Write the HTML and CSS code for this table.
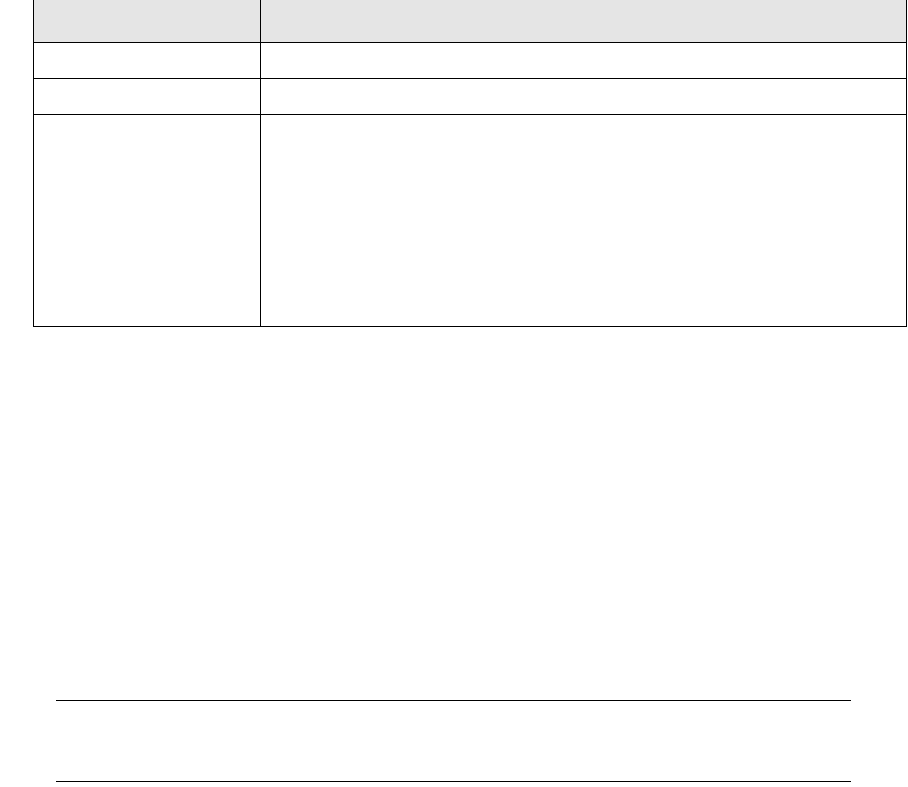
FILE: index.html
```html
<!DOCTYPE html>
<html lang="en">
  <head>
    <meta charset="UTF-8" />
    <meta name="viewport" content="width=device-width, initial-scale=1.0" />
    <title>Table</title>
    <link rel="stylesheet" href="styles.css">
  </head>
  <body>
    <table class="grid">
      <thead>
        <tr class="head">
          <th class="col-a"></th>
          <th class="col-b"></th>
        </tr>
      </thead>
      <tbody>
        <tr class="row">
          <td class="col-a"></td>
          <td class="col-b"></td>
        </tr>
        <tr class="row">
          <td class="col-a"></td>
          <td class="col-b"></td>
        </tr>
        <tr class="row tall">
          <td class="col-a"></td>
          <td class="col-b"></td>
        </tr>
      </tbody>
    </table>

    <div class="rule-box"></div>
  </body>
</html>
```

FILE: styles.css
```css
html,
body {
  margin: 0;
  padding: 0;
  background: #fff;
  font-family: "Liberation Sans", Arial, sans-serif;
}

.grid {
  border-collapse: separate;
  border-spacing: 0;
  width: 874px;
  margin-left: 33px;
  border: 1px solid #000;
  border-top: 0;
  table-layout: fixed;
}

.grid th,
.grid td {
  padding: 0;
  border-bottom: 1px solid #000;
}

.grid .col-a {
  width: 226px;
  border-right: 1px solid #000;
}

.head th {
  height: 42px;
  background-color: #e5e5e5;
}

.row td {
  height: 35px;
}

.row.tall td {
  height: 211px;
  border-bottom: 0;
}

.rule-box {
  width: 795px;
  height: 80px;
  margin: 373px 0 0 56px;
  border-top: 1px solid #000;
  border-bottom: 1px solid #000;
}
```
